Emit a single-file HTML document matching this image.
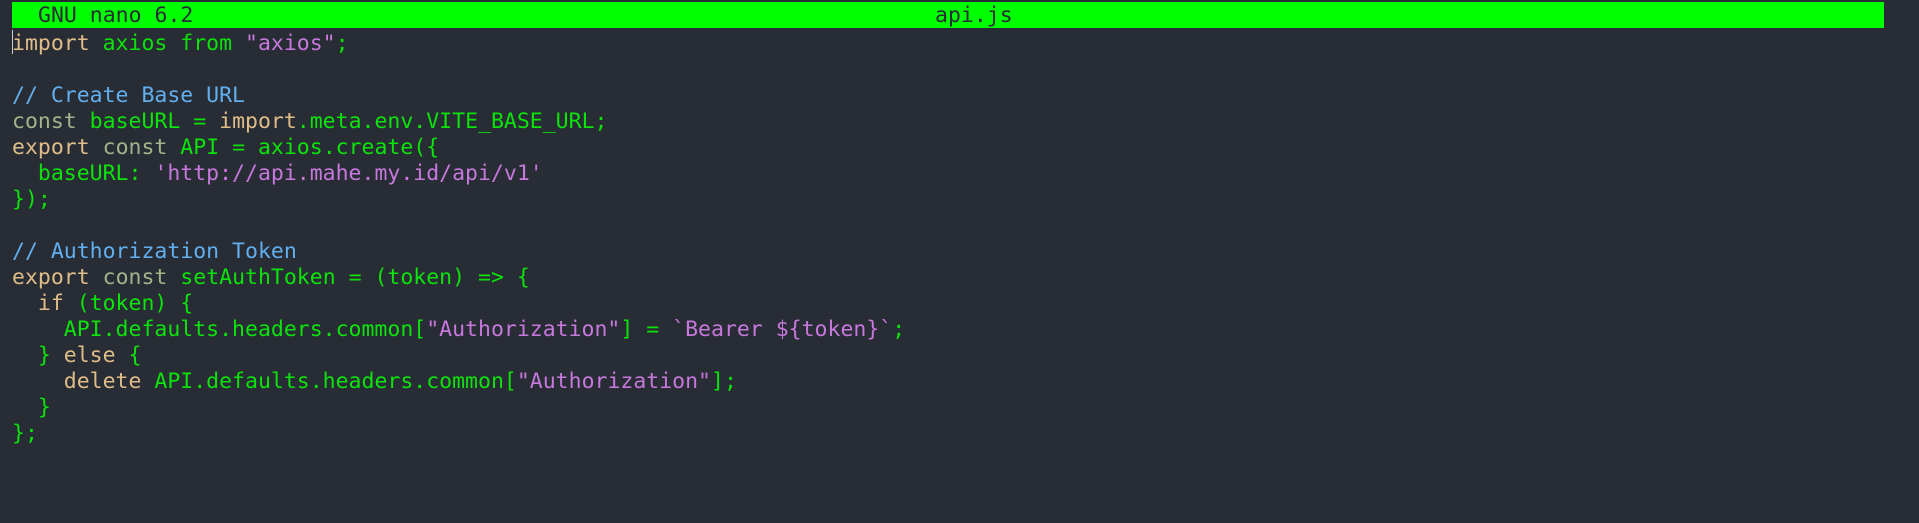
<!DOCTYPE html>
<html><head><meta charset="utf-8"><style>
html,body{margin:0;padding:0;width:1919px;height:523px;background:#282c34;overflow:hidden}
.bar{position:absolute;left:12px;top:2px;width:1872px;height:26px;background:#00ff00}
.t{position:absolute;font-family:"DejaVu Sans Mono","Liberation Mono",monospace;font-size:21.5px;color:#282c34;line-height:26px;top:3px;white-space:pre}
pre{position:absolute;left:12px;top:31px;margin:0;font-family:"DejaVu Sans Mono","Liberation Mono",monospace;font-size:21.5px;line-height:26px;color:#0be30b;white-space:pre}
.k{color:#dfbd88}.c{color:#a3b48c}.s{color:#c678dd}.m{color:#61afef}
.cur{position:absolute;left:12px;top:30px;width:1px;height:24px;background:#ccc}
</style></head><body>
<div class="bar"></div>
<div class="t" style="left:38px">GNU nano 6.2</div>
<div class="t" style="left:935px">api.js</div>
<div class="cur"></div>
<pre><span class="k">import</span> axios from <span class="s">"axios"</span>;

<span class="m">// Create Base URL</span>
<span class="c">const</span> baseURL = <span class="k">import</span>.meta.env.VITE_BASE_URL;
<span class="k">export</span> <span class="c">const</span> API = axios.create({
  baseURL: <span class="s">'http://api.mahe.my.id/api/v1'</span>
});

<span class="m">// Authorization Token</span>
<span class="k">export</span> <span class="c">const</span> setAuthToken = (token) => {
  <span class="k">if</span> (token) {
    API.defaults.headers.common[<span class="s">"Authorization"</span>] = <span class="s">`Bearer ${token}`</span>;
  } <span class="k">else</span> {
    <span class="k">delete</span> API.defaults.headers.common[<span class="s">"Authorization"</span>];
  }
};</pre>
</body></html>
